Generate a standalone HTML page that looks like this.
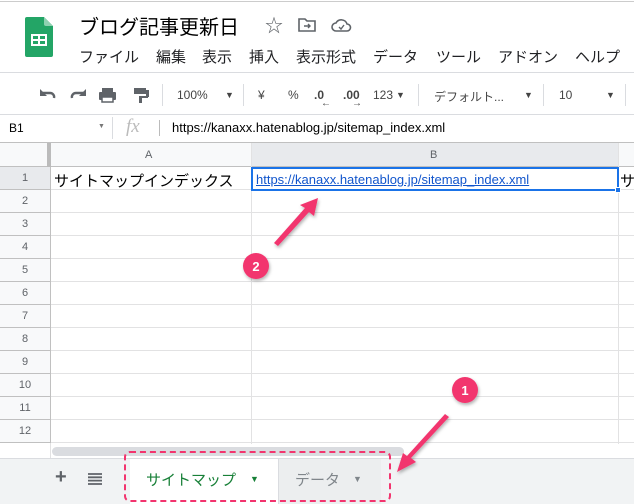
<!DOCTYPE html>
<html><head><meta charset="utf-8"><style>
*{margin:0;padding:0;box-sizing:border-box}
body{width:634px;height:504px;overflow:hidden;background:#fff;font-family:"Liberation Sans","Noto Sans CJK JP",sans-serif;position:relative;color:#202124}
.a{position:absolute;white-space:nowrap}
.menu{font-size:15px;top:46px;color:#202124}
.tb{font-size:12px;color:#444;top:88px}
.hl{position:absolute;left:0;width:634px;height:1px;background:#dadce0}
.rn{position:absolute;left:0;width:51px;height:23px;font-size:11px;color:#5f6368;text-align:center;line-height:23px;background:#f8f9fa;border-right:1px solid #c0c0c0}
</style></head><body>
<div class="hl" style="top:1px;background:#ccc"></div>
<svg class="a" style="left:25px;top:17px" width="28" height="40" viewBox="0 0 28 40"><path d="M2 0H19L28 9V38a2 2 0 0 1-2 2H2a2 2 0 0 1-2-2V2a2 2 0 0 1 2-2z" fill="#23a566"/><path d="M19 0L28 9H21a2 2 0 0 1-2-2z" fill="#8ed1b1"/><rect x="6" y="17" width="16" height="12" fill="#fff"/><rect x="8" y="19" width="5" height="3" fill="#23a566"/><rect x="15" y="19" width="5" height="3" fill="#23a566"/><rect x="8" y="24" width="5" height="3" fill="#23a566"/><rect x="15" y="24" width="5" height="3" fill="#23a566"/></svg>
<div class="a" style="left:79px;top:11px;font-size:20px;color:#000">ブログ記事更新日</div>
<div class="a" style="left:265px;top:12px;font-size:18px;color:#5f6368">☆</div>
<svg class="a" style="left:298px;top:17px" width="18" height="15"><path d="M1 2h6l2 2h8v10H1z" fill="none" stroke="#5f6368" stroke-width="1.6"/><path d="M6 9h6M10 7l2 2-2 2" stroke="#5f6368" stroke-width="1.4" fill="none"/></svg>
<svg class="a" style="left:331px;top:18px" width="21" height="15"><path d="M5 13a4 4 0 0 1 0-8 6 6 0 0 1 11 1 3.5 3.5 0 0 1 0 7z" fill="none" stroke="#5f6368" stroke-width="1.6"/><path d="M8 9l2 2 3-4" stroke="#5f6368" stroke-width="1.4" fill="none"/></svg>
<div class="a menu" style="left:79px">ファイル</div>
<div class="a menu" style="left:156px">編集</div>
<div class="a menu" style="left:202px">表示</div>
<div class="a menu" style="left:249px">挿入</div>
<div class="a menu" style="left:296px">表示形式</div>
<div class="a menu" style="left:373px">データ</div>
<div class="a menu" style="left:436px">ツール</div>
<div class="a menu" style="left:498px">アドオン</div>
<div class="a menu" style="left:575px">ヘルプ</div>
<div class="hl" style="top:72px"></div>
<svg class="a" style="left:38px;top:86px" width="120" height="18"><path d="M3 7h9a4 4 0 0 1 4 5" fill="none" stroke="#5f6368" stroke-width="2.4"/><path d="M2 3v7h7z" fill="#5f6368"/><path d="M47 7h-9a4 4 0 0 0-4 5" fill="none" stroke="#5f6368" stroke-width="2.4"/><path d="M48 3v7h-7z" fill="#5f6368"/><rect x="64" y="2" width="11" height="4" fill="#5f6368"/><rect x="61" y="6" width="17" height="8" rx="1" fill="#5f6368"/><rect x="64" y="11" width="11" height="5" fill="#fff" stroke="#5f6368" stroke-width="1.5"/><rect x="96" y="2" width="12" height="6" fill="#5f6368"/><rect x="108" y="4" width="3" height="7" fill="#5f6368"/><rect x="101" y="10" width="9" height="2" fill="#5f6368"/><rect x="101" y="10" width="3" height="7" fill="#5f6368"/></svg>
<div class="a" style="left:162px;top:84px;width:1px;height:22px;background:#dadce0"></div>
<div class="a tb" style="left:177px">100%</div>
<div class="a tb" style="left:225px;font-size:9px;top:90px">▼</div>
<div class="a" style="left:243px;top:84px;width:1px;height:22px;background:#dadce0"></div>
<div class="a tb" style="left:258px">¥</div>
<div class="a tb" style="left:288px">%</div>
<div class="a tb" style="left:314px;font-weight:bold">.0</div>
<div class="a tb" style="left:343px;font-weight:bold">.00</div>
<div class="a tb" style="left:321px;top:98px;font-size:10px">←</div>
<div class="a tb" style="left:352px;top:98px;font-size:10px">→</div>
<div class="a tb" style="left:373px">123</div>
<div class="a tb" style="left:396px;font-size:9px;top:90px">▼</div>
<div class="a" style="left:418px;top:84px;width:1px;height:22px;background:#dadce0"></div>
<div class="a tb" style="left:434px">デフォルト...</div>
<div class="a tb" style="left:524px;font-size:9px;top:90px">▼</div>
<div class="a" style="left:543px;top:84px;width:1px;height:22px;background:#dadce0"></div>
<div class="a tb" style="left:559px">10</div>
<div class="a tb" style="left:606px;font-size:9px;top:90px">▼</div>
<div class="a" style="left:625px;top:84px;width:1px;height:22px;background:#dadce0"></div>
<div class="hl" style="top:114px"></div>
<div class="a" style="left:9px;top:121px;font-size:12px;color:#000">B1</div>
<div class="a" style="left:98px;top:123px;font-size:7px;color:#777">▼</div>
<div class="a" style="left:112px;top:117px;width:1px;height:22px;background:#dadce0"></div>
<div class="a" style="left:126px;top:116px;font-size:19px;font-style:italic;color:#bbb;font-family:'Liberation Serif',serif">fx</div>
<div class="a" style="left:159px;top:120px;width:1px;height:16px;background:#bbb"></div>
<div class="a" style="left:172px;top:120px;font-size:13px;color:#000">https://kanaxx.hatenablog.jp/sitemap_index.xml</div>
<div class="hl" style="top:142px;background:#c0c0c0"></div>
<!-- header row -->
<div class="a" style="left:0;top:143px;width:634px;height:24px;background:#f8f9fa;border-bottom:1px solid #c0c0c0"></div>
<div class="a" style="left:252px;top:143px;width:366px;height:24px;background:#e8eaed;border-bottom:1px solid #c0c0c0"></div>
<div class="a" style="left:47px;top:143px;width:4px;height:24px;background:#bbb"></div>
<div class="a" style="left:145px;top:149px;font-size:11px;color:#5f6368">A</div>
<div class="a" style="left:430px;top:149px;font-size:11px;color:#5f6368">B</div>
<!-- rows -->
<div class="a" style="left:51px;top:167px;width:583px;height:277px;background:repeating-linear-gradient(#fff 0 22px,#e2e2e3 22px 23px)"></div>
<div class="a" style="left:251px;top:143px;width:1px;height:301px;background:#e2e2e3"></div>
<div class="a" style="left:618px;top:143px;width:1px;height:301px;background:#e2e2e3"></div>
<div class="rn" style="top:167px;background:#e8eaed;border-bottom:1px solid #c0c0c0">1</div>
<div class="rn" style="top:190px;border-bottom:1px solid #c0c0c0">2</div>
<div class="rn" style="top:213px;border-bottom:1px solid #c0c0c0">3</div>
<div class="rn" style="top:236px;border-bottom:1px solid #c0c0c0">4</div>
<div class="rn" style="top:259px;border-bottom:1px solid #c0c0c0">5</div>
<div class="rn" style="top:282px;border-bottom:1px solid #c0c0c0">6</div>
<div class="rn" style="top:305px;border-bottom:1px solid #c0c0c0">7</div>
<div class="rn" style="top:328px;border-bottom:1px solid #c0c0c0">8</div>
<div class="rn" style="top:351px;border-bottom:1px solid #c0c0c0">9</div>
<div class="rn" style="top:374px;border-bottom:1px solid #c0c0c0">10</div>
<div class="rn" style="top:397px;border-bottom:1px solid #c0c0c0">11</div>
<div class="rn" style="top:420px;border-bottom:1px solid #c0c0c0">12</div>
<div class="rn" style="top:443px;height:15px;background:#fff;border-right:1px solid #e2e2e3"></div>
<div class="a" style="left:54px;top:170px;font-size:15px;color:#000">サイトマップインデックス</div>
<div class="a" style="left:620px;top:170px;font-size:15px;color:#000">サ</div>
<div class="a" style="left:251px;top:167px;width:368px;height:24px;border:2px solid #1a73e8"></div>
<div class="a" style="left:615px;top:187px;width:6px;height:6px;background:#1a73e8;border:1px solid #fff"></div>
<div class="a" style="left:256px;top:172px;font-size:13px;color:#1155cc;text-decoration:underline">https://kanaxx.hatenablog.jp/sitemap_index.xml</div>
<div class="a" style="left:52px;top:447px;width:352px;height:9px;border-radius:5px;background:#dadce0"></div>
<!-- tab bar -->
<div class="a" style="left:0;top:458px;width:634px;height:46px;background:#f1f3f4;border-top:1px solid #dadce0"></div>
<div class="a" style="left:55px;top:466px;font-size:20px;color:#5f6368;font-weight:bold">+</div>
<svg class="a" style="left:88px;top:473px" width="14" height="12"><path d="M0 1h14M0 4.3h14M0 7.6h14M0 11h14" stroke="#5f6368" stroke-width="1.8"/></svg>
<div class="a" style="left:130px;top:459px;width:148px;height:45px;background:#fff"></div>
<div class="a" style="left:146px;top:469px;font-size:15px;color:#188038">サイトマップ</div>
<div class="a" style="left:250px;top:474px;font-size:9px;color:#188038">▼</div>
<div class="a" style="left:278px;top:459px;width:103px;height:45px;background:#eceeef;border-left:1px solid #dadce0"></div>
<div class="a" style="left:295px;top:469px;font-size:15px;color:#80868b">データ</div>
<div class="a" style="left:353px;top:474px;font-size:9px;color:#80868b">▼</div>
<div class="a" style="left:124px;top:451px;width:267px;height:51px;border:2px dashed #f2346e;border-radius:6px"></div>
<!-- annotations -->
<svg class="a" style="left:0;top:0" width="634" height="504">
<defs><filter id="s"><feDropShadow dx="1" dy="2" stdDeviation="1.5" flood-opacity=".3"/></filter></defs>
<g fill="#f2346e" filter="url(#s)">
<path d="M274 243L305 208 300 205 318 198 314 216 309 212 278 246z"/>
<path d="M449 417L411 458 416 462 397 472 403 453 407 456 445 414z"/>
<circle cx="256" cy="266" r="13"/><circle cx="465" cy="390" r="13"/>
</g>
<text x="256" y="271" font-size="13" font-weight="bold" fill="#fff" text-anchor="middle" font-family="Liberation Sans">2</text>
<text x="465" y="395" font-size="13" font-weight="bold" fill="#fff" text-anchor="middle" font-family="Liberation Sans">1</text>
</svg>
</body></html>
